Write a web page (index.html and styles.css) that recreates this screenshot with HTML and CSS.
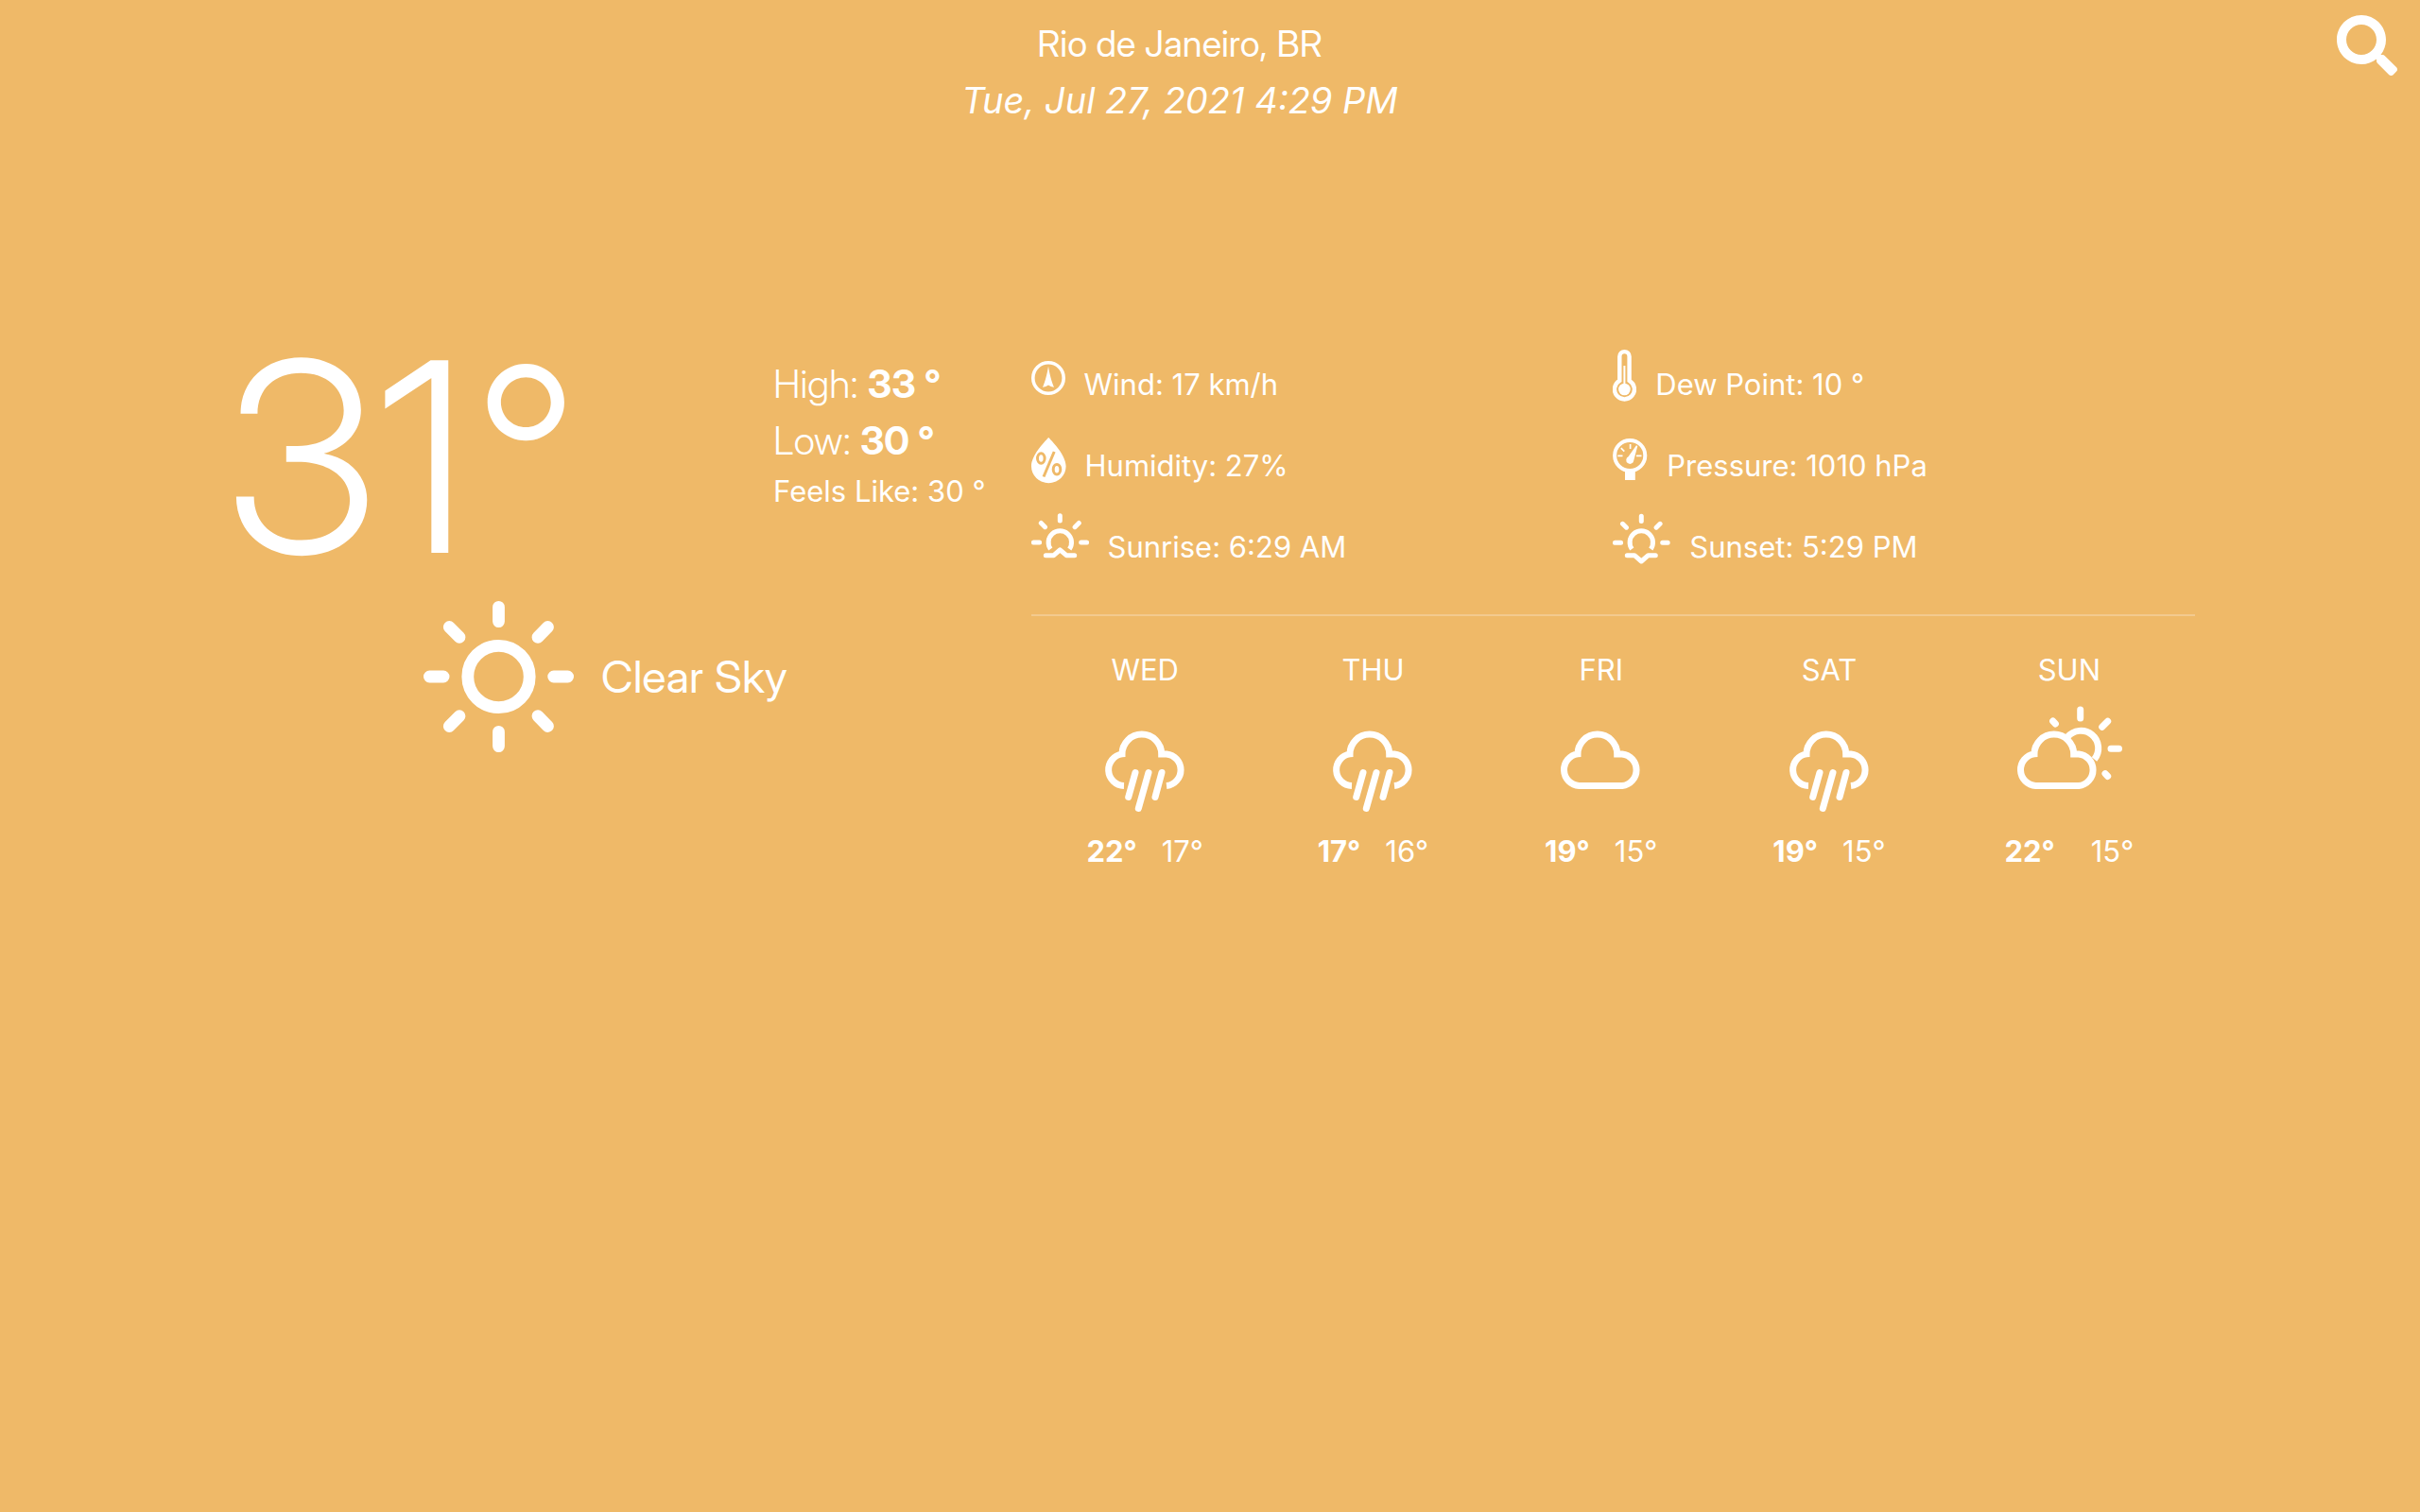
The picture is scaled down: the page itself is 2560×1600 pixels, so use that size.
FILE: index.html
```html
<!DOCTYPE html>
<html lang="en">
<head>
<meta charset="utf-8">
<meta name="viewport" content="width=device-width, initial-scale=1">
<title>Weather</title>
<link rel="stylesheet" href="styles.css">
</head>
<body>
<svg class="defs" aria-hidden="true">
  <symbol id="cloud" viewBox="0 0 87 120">
    <path d="M20.500 86.500A16.900 16.900 0 0 1 19 52.900A20.700 20.700 0 0 1 60.700 52.900H66A16.900 16.900 0 0 1 66 86.500Z"/>
  </symbol>
  <symbol id="rain" viewBox="0 0 87 120">
    <path d="M21 86.500A16.900 16.900 0 0 1 19 52.900A20.700 20.700 0 0 1 60.700 52.900H66A16.900 16.900 0 0 1 66 86.500"/>
    <path class="round" d="M33 72.500 25.700 98.500M47 72.500 36.300 110.500M61 72.500 54 98.500"/>
  </symbol>
</svg>

<header class="header">
  <div class="place">
    <h1 class="city">Rio de Janeiro, BR</h1>
    <time class="date" datetime="2021-07-27T16:29">Tue, Jul 27, 2021 4:29 PM</time>
  </div>
  <button class="search" type="button" aria-label="Search">
    <svg viewBox="0 0 512 512" width="64" height="64"><path d="M505 442.7L405.3 343c-4.5-4.5-10.6-7-17-7H372c27.6-35.3 44-79.7 44-128C416 93.1 322.9 0 208 0S0 93.1 0 208s93.1 208 208 208c48.3 0 92.7-16.4 128-44v16.3c0 6.4 2.5 12.5 7 17l99.7 99.7c9.4 9.4 24.6 9.4 33.9 0l28.3-28.3c9.4-9.4 9.4-24.6.1-34zM208 336c-70.7 0-128-57.2-128-128 0-70.7 57.2-128 128-128 70.7 0 128 57.2 128 128 0 70.7-57.2 128-128 128z"/></svg>
  </button>
</header>

<main class="weather">
  <section class="current">
    <div class="now">
      <div class="temp"><span>31</span><span class="degree">°</span></div>
      <div class="range">
        <p class="extreme">High: <strong>33 °</strong></p>
        <p class="extreme">Low: <strong>30 °</strong></p>
        <p>Feels Like: 30 °</p>
      </div>
    </div>
    <div class="condition">
      <svg class="line-icon sun-icon" viewBox="0 0 160 160" width="160" height="160" aria-hidden="true">
        <circle cx="79.500" cy="80" r="32.700"/>
        <path class="round" d="M79.500 6.400V21.600M79.500 138.400V153.600M6.400 80H21.100M137.700 80H152.600M27.300 27.500 38 38.300M121 121.700 131.500 132.500M131.500 27.500 121 38.300M38 121.700 27.300 132.500"/>
      </svg>
      <span>Clear Sky</span>
    </div>
  </section>

  <section class="details">
    <ul class="facts">
      <li class="fact">
        <svg viewBox="0 0 36 60" width="36" height="60" aria-hidden="true">
          <circle class="line" cx="18" cy="32" r="16.200" stroke-width="3.600"/>
          <path d="M18 19.500C17 27 14.500 36 12 41.700Q15.500 41.600 18 39.600 20.500 41.600 24 41.700C21.500 36 19 27 18 19.500Z"/>
        </svg>
        <span>Wind: 17 km/h</span>
      </li>
      <li class="fact">
        <svg viewBox="0 0 25 60" width="25" height="60" aria-hidden="true">
          <path class="line" stroke-width="4.400" d="M7.300 34.800V9.300a5.100 5.100 0 0 1 10.300 0V34.800A10.500 10.500 0 1 1 7.300 34.800Z"/>
          <path class="line" stroke-width="2" d="M12.400 19V44"/>
          <circle cx="12.400" cy="44" r="6.300"/>
        </svg>
        <span>Dew Point: 10 °</span>
      </li>
      <li class="fact">
        <svg viewBox="0 0 37 60" width="37" height="60" aria-hidden="true">
          <path d="M18.200 9C13 14.500 0 28 0 39.500A18.200 17.600 0 0 0 36.600 39.500C36.600 28 23.500 14.500 18.200 9Z"/>
          <g class="cutout">
            <ellipse cx="10.300" cy="31" rx="3.800" ry="5.300"/>
            <ellipse cx="27" cy="42.700" rx="3.800" ry="5.300"/>
            <path d="M24.200 24 13 50.500"/>
          </g>
        </svg>
        <span>Humidity: 27%</span>
      </li>
      <li class="fact">
        <svg viewBox="0 0 37 60" width="37" height="60" aria-hidden="true">
          <circle class="line" cx="18.200" cy="28" r="16.100" stroke-width="4"/>
          <path d="M13 44H23.800V54H13ZM25 17.300 26.300 17.900 22.200 33.500A4 4 0 1 1 16.500 29.300Z"/>
          <path class="line" stroke-width="1.700" d="M5.300 28.300H10.500M25 28.300H30.500M18.600 16V21M8.800 20.200 12.300 23.700"/>
        </svg>
        <span>Pressure: 1010 hPa</span>
      </li>
      <li class="fact">
        <svg class="line-icon horizon-icon" viewBox="0 0 61 60" width="61" height="60" aria-hidden="true">
          <path d="M20.300 41A12.200 12.200 0 1 1 40.300 41"/>
          <path class="round" d="M30.300 5.700V11M10.300 13.500 14.500 17.700M50.300 13.500 46.100 17.700M2.400 34H8.600M52.700 34H58.600M15.300 47.700H23.700L30.300 41.800 37.100 47.700H45.700"/>
        </svg>
        <span>Sunrise: 6:29 AM</span>
      </li>
      <li class="fact">
        <svg class="line-icon horizon-icon" viewBox="0 0 61 60" width="61" height="60" aria-hidden="true">
          <path d="M20.300 41A12.200 12.200 0 1 1 40.300 41"/>
          <path class="round" d="M30.300 6.300V11.500M10.500 14.300 14.500 18.200M50.100 14.300 46.100 18.200M2.400 34.300H8.600M52.700 34.300H58.200M15.300 47.700H23L30.300 54 37.600 47.700H45.300"/>
        </svg>
        <span>Sunset: 5:29 PM</span>
      </li>
    </ul>

    <hr class="rule">

    <ul class="forecast">
      <li class="day">
        <span>WED</span>
        <svg class="line-icon day-icon" width="87" height="120" aria-hidden="true"><use href="#rain"/></svg>
        <div class="temps"><strong>22°</strong><span>17°</span></div>
      </li>
      <li class="day">
        <span>THU</span>
        <svg class="line-icon day-icon" width="87" height="120" aria-hidden="true"><use href="#rain"/></svg>
        <div class="temps"><strong>17°</strong><span>16°</span></div>
      </li>
      <li class="day">
        <span>FRI</span>
        <svg class="line-icon day-icon" width="87" height="120" aria-hidden="true"><use href="#cloud"/></svg>
        <div class="temps"><strong>19°</strong><span>15°</span></div>
      </li>
      <li class="day">
        <span>SAT</span>
        <svg class="line-icon day-icon" width="87" height="120" aria-hidden="true"><use href="#rain"/></svg>
        <div class="temps"><strong>19°</strong><span>15°</span></div>
      </li>
      <li class="day day-wide">
        <span>SUN</span>
        <svg class="line-icon day-icon" viewBox="0 0 112 120" width="112" height="120" aria-hidden="true">
          <path d="M20.500 86.500A16.900 16.900 0 0 1 19 52.900A20.700 20.700 0 0 1 60.700 52.900H66A16.900 16.900 0 0 1 66 86.500Z"/>
          <path d="M54 35A18.200 18.200 0 0 1 82.500 58.500"/>
          <path class="round" d="M67.700 6V15M96.700 18.200 90.700 24.200M100 47.200H108.500M38.600 18 41.400 21M94 73.600 96.700 76.500"/>
        </svg>
        <div class="temps"><strong>22°</strong><span>15°</span></div>
      </li>
    </ul>
  </section>
</main>
</body>
</html>
```

FILE: styles.css
```css
* {
  box-sizing: border-box;
  margin: 0;
  padding: 0;
}

body {
  min-height: 100vh;
  background: #efb968;
  color: #fff;
  font-family: Inter, "Liberation Sans", sans-serif;
  font-size: 31px;
  line-height: 48px;
}

ul {
  list-style: none;
}

svg {
  display: block;
  flex: none;
  fill: currentColor;
}

.defs {
  display: none;
}

.line,
.line-icon {
  fill: none;
  stroke: currentColor;
}

.round {
  stroke-linecap: round;
  stroke-linejoin: round;
}

.city,
.temp,
.extreme,
.condition {
  font-family: "Inter Display", Inter, "Liberation Sans", sans-serif;
}

.header {
  display: flex;
  align-items: flex-start;
  padding: 16px 24px 0 0;
}

.place {
  flex: 1;
  padding-left: 24px;
  font-size: 38px;
  line-height: 60px;
  text-align: center;
}

.city {
  font-size: inherit;
  font-weight: 400;
}

.date {
  display: block;
  font-style: italic;
}

.search {
  border: 0;
  background: none;
  color: inherit;
  cursor: pointer;
}

.weather {
  display: grid;
  grid-template-columns: 9fr 13fr;
  padding: 208px 238px 0;
}

.current {
  padding-right: 48px;
}

.now {
  display: flex;
  justify-content: space-between;
}

.temp {
  display: flex;
  font-size: 280px;
  font-weight: 300;
  line-height: 280px;
}

.degree {
  padding-left: 8px;
  font-size: 256px;
  line-height: 272px;
}

.range {
  padding-top: 32px;
}

.extreme {
  font-size: 41px;
  font-weight: 300;
  line-height: 60px;
}

strong {
  font-weight: 700;
}

.condition {
  display: flex;
  align-items: center;
  justify-content: center;
  gap: 28px;
  padding-top: 12px;
  font-size: 47px;
}

.sun-icon {
  stroke-width: 12.8px;
}

.details {
  padding-top: 24px;
}

.facts {
  display: grid;
  grid-template-columns: 1fr 1fr;
  row-gap: 26px;
}

.fact {
  display: flex;
  align-items: flex-end;
  gap: 20px;
  line-height: 42px;
}

.cutout {
  fill: none;
  stroke: #efb968;
  stroke-width: 3px;
}

.horizon-icon {
  stroke-width: 5px;
}

.rule {
  height: 2px;
  margin: 50px 0 33px;
  border: 0;
  background: rgba(255, 255, 255, 0.25);
}

.forecast {
  display: grid;
  grid-template-columns: 241fr 241fr 241fr 241fr 266fr;
}

.day {
  display: flex;
  flex-direction: column;
  align-items: center;
  gap: 12px;
}

.day-icon {
  stroke-width: 7px;
}

.temps {
  display: flex;
  gap: 26px;
}

.day-wide .temps {
  gap: 38px;
}
```
